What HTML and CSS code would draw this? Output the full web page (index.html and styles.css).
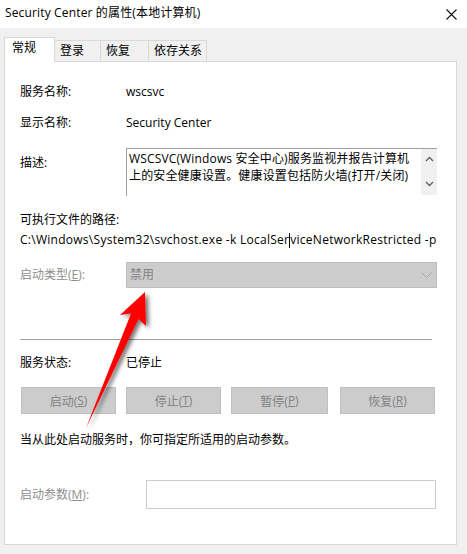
FILE: index.html
```html
<!DOCTYPE html>
<html lang="zh-CN">
<head>
<meta charset="utf-8">
<link rel="stylesheet" href="styles.css">
</head>
<body>
<div class="window">
  <div class="titlebar">
    <span class="title">Security Center 的属性(本地计算机)</span>
    <svg class="close" width="11" height="11" viewBox="0 0 11 11"><path d="M0.5 0.5L10.5 10.5M10.5 0.5L0.5 10.5" stroke="#111" stroke-width="1.1" fill="none"/></svg>
  </div>
  <div class="tabs">
    <div class="tab active">常规</div>
    <div class="tab t2">登录</div>
    <div class="tab t3">恢复</div>
    <div class="tab t4">依存关系</div>
  </div>
  <div class="panel">
    <div class="row r1"><span class="label">服务名称:</span><span class="value">wscsvc</span></div>
    <div class="row r2"><span class="label">显示名称:</span><span class="value">Security Center</span></div>
    <div class="row r3">
      <span class="label desc-label">描述:</span>
      <div class="textarea">
        <div class="ta-text">WSCSVC(Windows 安全中心)服务监视并报告计算机<br>上的安全健康设置。健康设置包括防火墙(打开/关闭)</div>
        <div class="scrollbar">
          <svg width="9" height="6" viewBox="0 0 9 6"><path d="M1 5L4.5 1.5L8 5" stroke="#606060" stroke-width="1.4" fill="none"/></svg>
          <svg width="9" height="6" viewBox="0 0 9 6"><path d="M1 1L4.5 4.5L8 1" stroke="#606060" stroke-width="1.4" fill="none"/></svg>
        </div>
      </div>
    </div>
    <div class="row r4">可执行文件的路径:</div>
    <div class="row r5">C:\Windows\System32\svchost.exe -k LocalSer<span class="caret"></span>viceNetworkRestricted -p</div>
    <div class="row r6">
      <span class="label disabled">启动类型(<u>E</u>):</span>
      <div class="combo">
        <span>禁用</span>
        <svg width="11" height="6" viewBox="0 0 11 6"><path d="M0.5 0.5L5.5 5.5L10.5 0.5" stroke="#a8a8a8" stroke-width="1" fill="none"/></svg>
      </div>
    </div>
    <div class="sep"></div>
    <div class="row r7"><span class="label">服务状态:</span><span class="value">已停止</span></div>
    <div class="buttons">
      <div class="btn b1">启动(<u>S</u>)</div>
      <div class="btn b2">停止(<u>T</u>)</div>
      <div class="btn b3">暂停(<u>P</u>)</div>
      <div class="btn b4">恢复(<u>R</u>)</div>
    </div>
    <div class="row r8">当从此处启动服务时，你可指定所适用的启动参数。</div>
    <div class="row r9">
      <span class="label param-label disabled">启动参数(<u>M</u>):</span>
      <div class="input"></div>
    </div>
  </div>
</div>
<svg class="arrow" width="467" height="554" viewBox="0 0 467 554">
  <defs>
    <filter id="sh" x="-50%" y="-50%" width="200%" height="200%">
      <feDropShadow dx="3" dy="2" stdDeviation="2" flood-color="#000" flood-opacity="0.55"/>
    </filter>
  </defs>
  <polygon filter="url(#sh)" fill="#ff0000" points="145,292 146,326 138.5,319 86,428 131,313.5 120,315"/>
</svg>
</body>
</html>
```

FILE: styles.css
```css
html, body {
  margin: 0;
  padding: 0;
}
body {
  width: 467px;
  height: 554px;
  overflow: hidden;
  background: #f0f0f0;
  font-family: "Open Sans", "Noto Sans CJK SC", sans-serif;
  font-size: 12px;
  color: #000;
  position: relative;
}
.titlebar {
  height: 28px;
  background: #fff;
  display: flex;
  align-items: center;
  justify-content: space-between;
  padding: 0 10px 2px 5px;
  box-sizing: border-box;
}
.title {
  font-size: 12px;
  line-height: 16px;
  letter-spacing: 0.15px;
}
.close {
  display: block;
  margin-top: 2px;
}
.tabs {
  display: flex;
  align-items: flex-end;
  height: 33px;
  padding-left: 4px;
}
.tab {
  height: 21px;
  border: 1px solid #d9d9d9;
  border-bottom: none;
  border-left: none;
  box-sizing: border-box;
  padding-left: 5px;
  line-height: 20px;
}
.tab.active {
  height: 25px;
  width: 51px;
  background: #fff;
  border-left: 1px solid #d9d9d9;
  padding-left: 7px;
  line-height: 20px;
  position: relative;
  top: 1px;
  z-index: 1;
}
.t2 { width: 46px; }
.t3 { width: 48px; }
.t4 { width: 58px; }
.panel {
  margin-left: 4px;
  width: 453px;
  height: 484px;
  box-sizing: border-box;
  background: #fff;
  border: 1px solid #d9d9d9;
  padding: 20px 0 0 15px;
}
.row {
  display: flex;
  align-items: center;
  line-height: 20px;
  white-space: nowrap;
}
.label {
  width: 106px;
  flex: none;
}
.disabled { color: #8d8d8d; }
.r2 { margin-top: 11px; }
.r3 { margin-top: 15px; align-items: flex-start; }
.desc-label { padding-top: 5px; }
.textarea {
  width: 311px;
  height: 48px;
  border-top: 1px solid #a0a0a0;
  border-left: 1px solid #a0a0a0;
  box-sizing: border-box;
  display: flex;
  justify-content: space-between;
}
.ta-text {
  padding: 1px 0 0 2px;
  line-height: 17px;
  letter-spacing: 0.15px;
}
.scrollbar {
  width: 16px;
  height: 46px;
  background: #f0f0f0;
  display: flex;
  flex-direction: column;
  align-items: center;
  justify-content: space-between;
  padding: 7px 0 8px;
  box-sizing: border-box;
}
.scrollbar svg { display: block; }
.r4 { margin-top: 14px; }
.r5 { letter-spacing: 0.27px; }
.caret {
  display: inline-block;
  width: 1px;
  height: 15px;
  background: #000;
  vertical-align: -3px;
}
.r6 { margin-top: 12px; }
.combo {
  width: 311px;
  height: 26px;
  box-sizing: border-box;
  background: #cccccc;
  border: 1px solid #bfbfbf;
  display: flex;
  align-items: center;
  justify-content: space-between;
  padding: 0 4px 0 3px;
  color: #838383;
}
.combo svg { display: block; }
.sep {
  margin-top: 51px;
  width: 412px;
  height: 1px;
  background: #a0a0a0;
}
.r7 { margin-top: 13px; }
.buttons {
  display: flex;
  margin-top: 14px;
  padding-left: 1px;
}
.btn {
  height: 27px;
  box-sizing: border-box;
  background: #cccccc;
  border: 1px solid #bfbfbf;
  color: #838383;
  display: flex;
  align-items: center;
  justify-content: center;
}
.b1 { width: 95px; }
.b2 { width: 95px; margin-left: 10px; }
.b3 { width: 97px; margin-left: 10px; }
.b4 { width: 95px; margin-left: 12px; }
.r8 { margin-top: 16px; }
.r9 { margin-top: 30px; }
.param-label { width: 126px; }
.input {
  width: 290px;
  height: 29px;
  box-sizing: border-box;
  border: 1px solid #cccccc;
}
.arrow {
  position: absolute;
  left: 0;
  top: 0;
  pointer-events: none;
}
```
